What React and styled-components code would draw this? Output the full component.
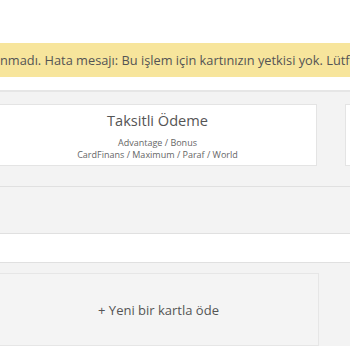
import React from "react";
import styled, { createGlobalStyle } from "styled-components";

const GlobalStyle = createGlobalStyle`
  html, body {
    margin: 0;
    padding: 0;
    background: #fff;
    overflow: hidden;
  }
  body {
    font-family: "Open Sans", "Noto Sans", sans-serif;
    color: #555;
  }
`;

const Page = styled.div`
  width: 350px;
  height: 350px;
  overflow: hidden;
  padding-top: 43px;
  box-sizing: border-box;
`;

const Alert = styled.div`
  height: 34px;
  background: #f7e59c;
  display: flex;
  align-items: center;
  white-space: nowrap;
  font-size: 12.8px;
  color: #545454;
`;

const Lead = styled.span`
  width: 0;
  display: flex;
  justify-content: flex-end;
`;

const Section = styled.div`
  margin-top: 13px;
  background: #f3f3f3;
  border-top: 2px solid #e6e6e6;
`;

const Options = styled.div`
  display: flex;
  gap: 28px;
  margin-left: -2px;
  padding: 12px 0 20px;
  border-bottom: 1px solid #e0e0e0;
`;

const OptionCard = styled.div`
  flex: 0 0 319px;
  height: 62px;
  box-sizing: border-box;
  background: #fff;
  border: 1px solid #e4e4e4;
  display: flex;
  flex-direction: column;
  align-items: center;
  padding-top: 4px;
`;

const OptionTitle = styled.div`
  font-size: 14.6px;
  line-height: 22px;
  color: #555;
`;

const OptionNote = styled.div`
  font-size: 9px;
  line-height: 12px;
  color: #666;
  margin-top: ${(p) => (p.$first ? "6px" : "0")};
`;

const Band = styled.div`
  height: ${(p) => p.$h}px;
  background: ${(p) => (p.$white ? "#fff" : "#f3f3f3")};
  border-bottom: 1px solid #e0e0e0;
`;

const NewCardArea = styled.div`
  background: #f3f3f3;
  padding-top: 10px;
  margin-left: -2px;
`;

const NewCardButton = styled.div`
  width: 321px;
  height: 73px;
  box-sizing: border-box;
  border: 1px solid #e6e6e6;
  background: #f4f4f4;
  display: flex;
  align-items: center;
  justify-content: center;
  padding-top: 1px;
  font-size: 13px;
  color: #555;
`;

export default function App() {
  return (
    <>
      <GlobalStyle />
      <Page>
        <Alert>
          <Lead>İşleminiz tamamla</Lead>
          nmadı. Hata mesajı: Bu işlem için kartınızın yetkisi yok. Lütfen başka bir kart deneyin.
        </Alert>
        <Section>
          <Options>
            <OptionCard>
              <OptionTitle>Taksitli Ödeme</OptionTitle>
              <OptionNote $first>Advantage / Bonus</OptionNote>
              <OptionNote>CardFinans / Maximum / Paraf / World</OptionNote>
            </OptionCard>
            <OptionCard>
              <OptionTitle>Tek Çekim</OptionTitle>
            </OptionCard>
          </Options>
          <Band $h={46} />
          <Band $h={28} $white />
          <NewCardArea>
            <NewCardButton>+ Yeni bir kartla öde</NewCardButton>
          </NewCardArea>
        </Section>
      </Page>
    </>
  );
}
